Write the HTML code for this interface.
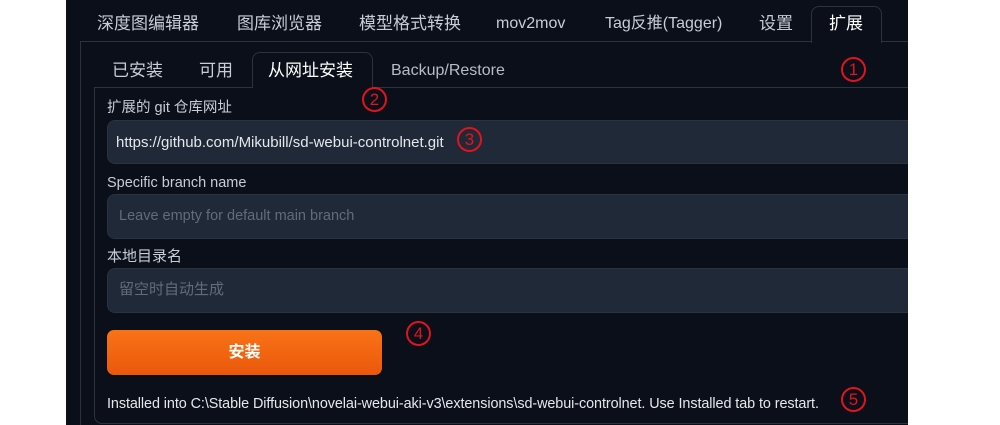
<!DOCTYPE html>
<html><head><meta charset="utf-8"><style>
*{margin:0;padding:0;box-sizing:border-box}
body{width:1000px;height:425px;background:#fff;position:relative;overflow:hidden;font-family:"Liberation Sans","Noto Sans CJK SC",sans-serif;}
.dark{position:absolute;left:66px;top:0;width:842px;height:425px;background:#0b0f19;overflow:hidden}
.t{position:absolute;color:#c8ccd4;font-size:17px;line-height:20px;white-space:nowrap}
.line{position:absolute;background:#2c3340}
.inp{position:absolute;left:41px;width:801px;background:#1f2937;border-radius:8px 0 0 8px;border:1px solid #2a3342;border-right:none}
.red{position:absolute;width:25px;height:25px;border:2px solid #e0141e;border-radius:50%;color:#e0141e;font-size:17px;line-height:21px;text-align:center;font-family:"Liberation Sans",sans-serif}
.btn{position:absolute;left:41px;top:330px;width:275px;height:45px;border-radius:7px;background:linear-gradient(#f97316,#ea580c);color:#fff;font-weight:bold;font-size:16px;text-align:center;line-height:45px}
</style></head><body>
<div class="dark">
<div class="t" style="left:31px;top:14px">深度图编辑器</div>
<div class="t" style="left:171px;top:14px">图库浏览器</div>
<div class="t" style="left:293px;top:14px">模型格式转换</div>
<div class="t" style="left:430px;top:14px;font-size:16px">mov2mov</div>
<div class="t" style="left:539px;top:14px;font-size:16px">Tag反推(Tagger)</div>
<div class="t" style="left:693px;top:14px">设置</div>
<div style="position:absolute;left:745px;top:6px;width:71px;height:37px;border:1px solid #2c3340;border-bottom:none;border-radius:8px 8px 0 0;background:#0b0f19"></div>
<div class="t" style="left:763px;top:14px;color:#fff">扩展</div>
<div class="line" style="left:14px;top:41px;width:731px;height:1px"></div>
<div class="line" style="left:816px;top:41px;width:26px;height:1px"></div>
<div class="line" style="left:14px;top:41px;width:1px;height:384px"></div>
<div class="t" style="left:46px;top:61px">已安装</div>
<div class="t" style="left:133px;top:61px">可用</div>
<div style="position:absolute;left:186px;top:52px;width:121px;height:36px;border:1px solid #2c3340;border-bottom:none;border-radius:8px 8px 0 0;background:#0b0f19"></div>
<div class="t" style="left:202px;top:61px;color:#fff">从网址安装</div>
<div class="t" style="left:325px;top:61px;font-size:16px;color:#b8bcc4">Backup/Restore</div>
<div class="line" style="left:28px;top:87px;width:158px;height:1px"></div>
<div class="line" style="left:307px;top:87px;width:535px;height:1px"></div>
<div style="position:absolute;left:28px;top:87px;width:830px;height:337px;border:1px solid #2c3340;border-top:none;border-right:none;border-radius:0 0 0 8px"></div>
<div class="red" style="left:775px;top:57px">1</div>
<div class="red" style="left:296px;top:87px">2</div>
<div class="t" style="left:41px;top:98px;font-size:14.5px">扩展的 git 仓库网址</div>
<div class="inp" style="top:120px;height:44px"></div>
<div class="t" style="left:50px;top:133px;font-size:15px;color:#e5e7eb">https://github.com/Mikubill/sd-webui-controlnet.git</div>
<div class="red" style="left:391px;top:127px">3</div>
<div class="t" style="left:41px;top:173px;font-size:14.5px">Specific branch name</div>
<div class="inp" style="top:194px;height:45px"></div>
<div class="t" style="left:53px;top:206px;font-size:14.5px;color:#646b78">Leave empty for default main branch</div>
<div class="t" style="left:41px;top:247px;font-size:15px">本地目录名</div>
<div class="inp" style="top:268px;height:45px"></div>
<div class="t" style="left:53px;top:280px;font-size:15px;color:#646b78">留空时自动生成</div>
<div class="btn">安装</div>
<div class="red" style="left:340px;top:321px">4</div>
<div class="t" style="left:41px;top:394px;font-size:14.4px;letter-spacing:-0.08px;color:#e5e7eb">Installed into C:\Stable Diffusion\novelai-webui-aki-v3\extensions\sd-webui-controlnet. Use Installed tab to restart.</div>
<div class="red" style="left:775px;top:387px">5</div>
</div>
</body></html>
